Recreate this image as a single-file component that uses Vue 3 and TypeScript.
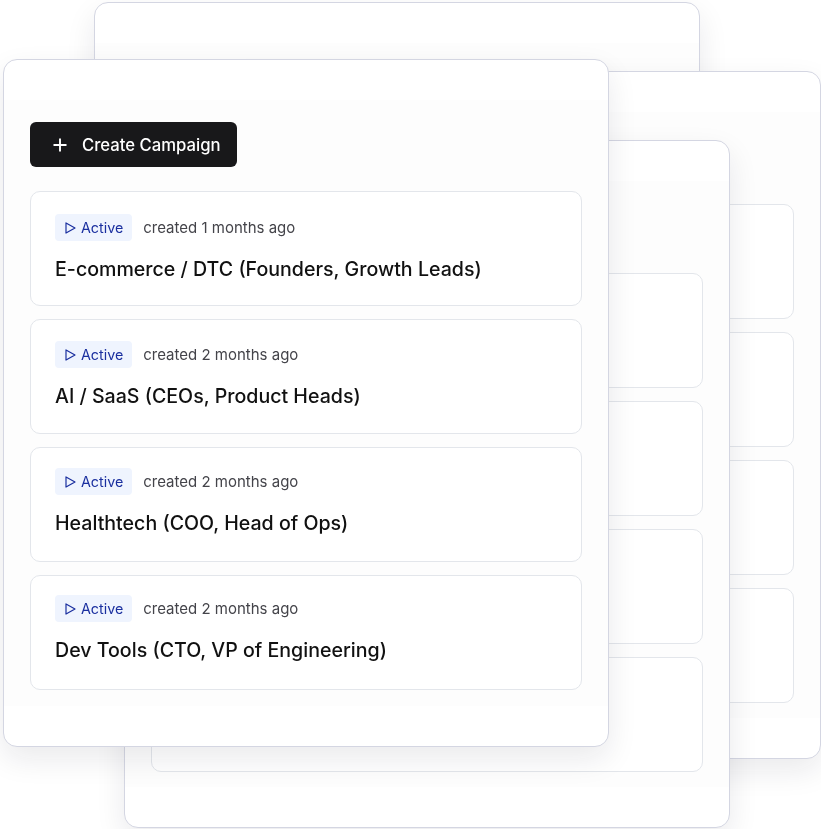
<script setup lang="ts">
interface Campaign { age: string; title: string }
const campaigns: Campaign[] = [
  { age: 'created 1 months ago', title: 'E-commerce / DTC (Founders, Growth Leads)' },
  { age: 'created 2 months ago', title: 'AI / SaaS (CEOs, Product Heads)' },
  { age: 'created 2 months ago', title: 'Healthtech (COO, Head of Ops)' },
  { age: 'created 2 months ago', title: 'Dev Tools (CTO, VP of Engineering)' },
]
const blanks = [1, 2, 3, 4]
</script>

<template>
  <div class="stage">
    <section class="window win-top"><div class="tint"></div></section>

    <section class="window win-right">
      <div class="tint">
        <div class="list">
          <div v-for="b in blanks" :key="b" class="card"></div>
        </div>
      </div>
    </section>

    <section class="window win-mid">
      <div class="tint">
        <div class="list">
          <div v-for="b in blanks" :key="b" class="card"></div>
        </div>
      </div>
    </section>

    <section class="window win-main">
      <div class="tint">
        <button class="create" type="button">
          <svg class="plus" width="14" height="14" viewBox="0 0 14 14" fill="none" stroke="currentColor" stroke-width="1.9">
            <path d="M7 .5v13M.5 7h13" />
          </svg>
          <span>Create Campaign</span>
        </button>
        <div class="list">
          <article v-for="c in campaigns" :key="c.title" class="card filled">
            <div class="meta">
              <span class="badge">
                <svg width="11" height="12" viewBox="0 0 11 12" fill="none" stroke="currentColor" stroke-width="1.2" stroke-linejoin="round">
                  <path d="M1 .9v10.2L10 6z" />
                </svg>
                Active
              </span>
              <span class="age">{{ c.age }}</span>
            </div>
            <h3 class="title">{{ c.title }}</h3>
          </article>
        </div>
      </div>
    </section>
  </div>
</template>

<style>
html, body { margin: 0; background: #fff; }
</style>

<style scoped>
.stage {
  position: relative;
  width: 821px;
  height: 829px;
  overflow: hidden;
  background: #fff;
  font-family: Inter, "Liberation Sans", sans-serif;
  filter: blur(0.35px);
}
.window {
  position: absolute;
  box-sizing: border-box;
  width: 606px;
  height: 688px;
  padding: 40px 0;
  background: #fff;
  border: 1px solid #d4d6e2;
  border-radius: 14px;
  box-shadow: 0 12px 30px rgba(17, 20, 40, 0.09);
}
.win-top { left: 94px; top: 2px; }
.win-right { left: 215px; top: 71px; }
.win-mid { left: 124px; top: 140px; }
.win-main { left: 3px; top: 59px; }
.tint {
  box-sizing: border-box;
  height: 100%;
  padding: 22px 26px 0;
  background: #fdfdfd;
}
.list {
  display: flex;
  flex-direction: column;
  gap: 13px;
  padding-top: 69.5px;
}
.create + .list { padding-top: 24px; }
.card {
  box-sizing: border-box;
  height: 115px;
  background: #fff;
  border: 1px solid #e3e6eb;
  border-radius: 10px;
}
.filled { padding: 22px 24px 0; }
.filled:nth-child(2) { padding-top: 21px; }
.filled:nth-child(3) { padding-top: 20px; }
.filled:nth-child(4) { padding-top: 19px; }
.create {
  display: flex;
  align-items: center;
  gap: 15px;
  box-sizing: border-box;
  width: 207px;
  height: 45px;
  padding: 0 0 0 23px;
  border: none;
  border-radius: 6px;
  background: #18181a;
  color: #fff;
  font: 500 16.7px Inter, "Liberation Sans", sans-serif;
}
.plus { flex: none; }
.meta {
  display: flex;
  align-items: center;
  gap: 11px;
}
.badge {
  display: inline-flex;
  align-items: center;
  gap: 5px;
  box-sizing: border-box;
  height: 27px;
  padding: 0 9px 0 10px;
  border-radius: 4px;
  background: #eff4fe;
  color: #1a2f9f;
  font-size: 14.3px;
}
.age {
  color: #44444a;
  font-size: 15px;
}
.title {
  margin: 16px 0 0;
  color: #111;
  font-size: 19.6px;
  font-weight: 500;
  line-height: 24px;
}
</style>
